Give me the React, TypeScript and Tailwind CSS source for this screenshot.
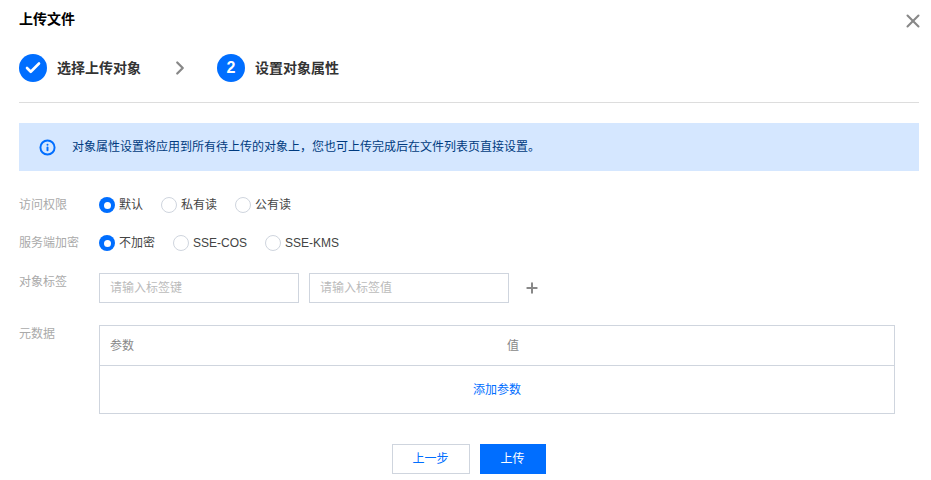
import { Check, ChevronRight, Info, Plus, X } from "lucide-react";

const FONT = "[font-family:'Liberation_Sans','Noto_Sans_CJK_SC',sans-serif]";

function Radio({ label, checked }: { label: string; checked?: boolean }) {
  return (
    <label className="flex items-center gap-1">
      {checked ? (
        <span className="flex h-4 w-4 items-center justify-center rounded-full bg-[#006eff]">
          <span className="h-[7px] w-[7px] rounded-full bg-white" />
        </span>
      ) : (
        <span className="h-4 w-4 rounded-full border border-[#cfd5de] bg-white" />
      )}
      <span className="text-xs leading-4 text-[#444]">{label}</span>
    </label>
  );
}

function Field({ label, className, children }: { label: string; className?: string; children: React.ReactNode }) {
  return (
    <div className={`flex ${className ?? ""}`}>
      <div className="w-20 shrink-0 text-xs leading-[18px] text-[#aaa]">{label}</div>
      {children}
    </div>
  );
}

function TagInput({ placeholder }: { placeholder: string }) {
  return (
    <div className="flex h-[30px] w-[200px] items-center border border-[#cfd5de] bg-white px-2.5 text-xs text-[#bbb]">
      {placeholder}
    </div>
  );
}

export default function App() {
  return (
    <div className={`${FONT} h-[480px] w-[931px] overflow-hidden bg-white pl-[19px] pr-3`}>
      <div className="flex h-[54px] items-start justify-between pt-[11px]">
        <h1 className="text-sm leading-[17px] font-bold text-black">上传文件</h1>
        <X className="-mr-[5px] -mt-px h-[22px] w-[22px] text-[#888]" strokeWidth={2.25} />
      </div>

      <div className="flex h-7 items-center">
        <span className="flex h-7 w-7 items-center justify-center rounded-full bg-[#006eff]">
          <Check className="h-[18px] w-[18px] text-white" strokeWidth={3.5} />
        </span>
        <span className="ml-2.5 text-sm font-bold text-[#333]">选择上传对象</span>
        <ChevronRight className="ml-7 h-[22px] w-[22px] text-[#888]" strokeWidth={2.5} />
        <span className="ml-[26px] flex h-7 w-7 items-center justify-center rounded-full bg-[#006eff] text-base font-bold text-white">
          2
        </span>
        <span className="ml-2.5 text-sm font-bold text-[#333]">设置对象属性</span>
      </div>

      <div className="mt-5 h-px bg-[#ddd]" />

      <div className="mt-5 flex h-12 items-center bg-[#d5e7ff] pl-5">
        <Info className="h-[17px] w-[17px] text-[#006eff]" strokeWidth={2.75} />
        <span className="ml-4 text-xs text-[#003b80]">
          对象属性设置将应用到所有待上传的对象上，您也可上传完成后在文件列表页直接设置。
        </span>
      </div>

      <Field label="访问权限" className="mt-[25px] items-center">
        <div className="flex gap-[18px]">
          <Radio label="默认" checked />
          <Radio label="私有读" />
          <Radio label="公有读" />
        </div>
      </Field>

      <Field label="服务端加密" className="mt-5 items-center">
        <div className="flex gap-[18px]">
          <Radio label="不加密" checked />
          <Radio label="SSE-COS" />
          <Radio label="SSE-KMS" />
        </div>
      </Field>

      <Field label="对象标签" className="mt-[21px]">
        <div className="flex items-center gap-2.5">
          <TagInput placeholder="请输入标签键" />
          <TagInput placeholder="请输入标签值" />
          <Plus className="ml-[5px] h-4 w-4 text-[#888]" strokeWidth={3} />
        </div>
      </Field>

      <Field label="元数据" className="mt-[22px]">
        <div className="h-[89px] w-[796px] border border-[#cfd5de] text-xs">
          <div className="flex h-10 items-center border-b border-[#cfd5de] pl-2.5 text-[#888]">
            <span className="w-[397px]">参数</span>
            <span>值</span>
          </div>
          <div className="flex h-[47px] items-center justify-center text-[#006eff]">添加参数</div>
        </div>
      </Field>

      <div className="mt-[30px] flex justify-center gap-2.5 pr-[1px]">
        <button className="h-[30px] w-[78px] border border-[#cfd5de] bg-white text-xs text-[#006eff]">上一步</button>
        <button className="h-[30px] w-[66px] bg-[#006eff] text-xs text-white">上传</button>
      </div>
    </div>
  );
}
